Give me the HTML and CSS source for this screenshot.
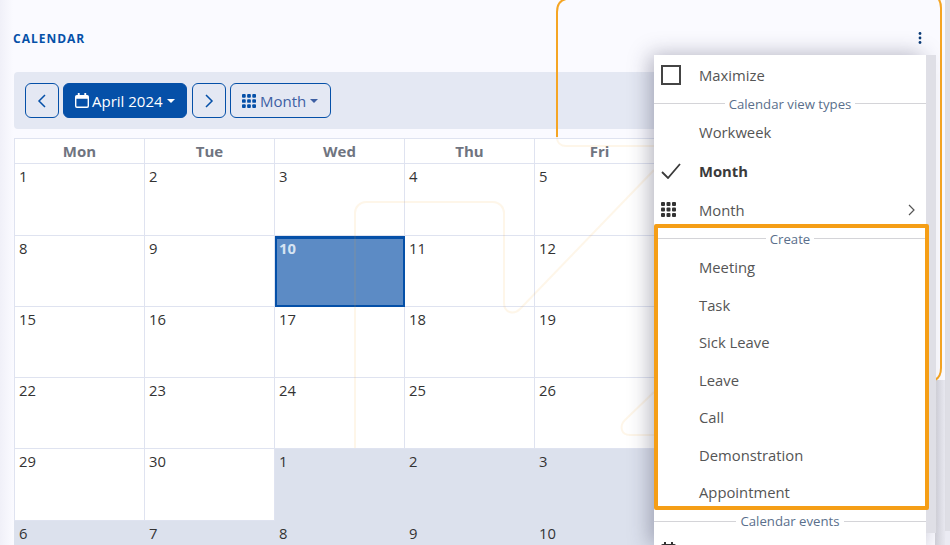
FILE: index.html
```html
<!DOCTYPE html>
<html lang="en">
<head>
    <meta charset="UTF-8">
    <meta name="viewport" content="width=device-width, initial-scale=1.0">
    <title>Calendar</title>
    <link rel="stylesheet" href="styles.css">
</head>
<body>

<div class="page">
    <div class="title-row">
        <h1>CALENDAR</h1>
        <button class="kebab" aria-label="Options">
            <svg width="4" height="12" viewBox="0 0 4 12"><circle cx="2" cy="1.5" r="1.4"/><circle cx="2" cy="6" r="1.4"/><circle cx="2" cy="10.5" r="1.4"/></svg>
        </button>
    </div>

    <div class="toolbar">
        <button class="btn btn-arrow" aria-label="Previous">
            <svg width="10" height="16" viewBox="0 0 10 16"><path d="M8 2 2 8l6 6" fill="none" stroke="currentColor" stroke-width="1.5"/></svg>
        </button>
        <button class="btn btn-date">
            <svg width="14" height="15" viewBox="0 0 15 16"><path d="M3 0h2v2h5V0h2v2h1a2 2 0 0 1 2 2v10a2 2 0 0 1-2 2H2a2 2 0 0 1-2-2V4a2 2 0 0 1 2-2h1zM1.5 6v8c0 .3.2.5.5.5h11c.3 0 .5-.2.5-.5V6z" fill="currentColor"/></svg>
            April 2024<span class="caret"></span>
        </button>
        <button class="btn btn-arrow btn-next" aria-label="Next">
            <svg width="10" height="16" viewBox="0 0 10 16"><path d="M2 2l6 6-6 6" fill="none" stroke="currentColor" stroke-width="1.5"/></svg>
        </button>
        <button class="btn btn-view">
            <svg width="14" height="14" viewBox="0 0 15 15"><g fill="currentColor"><rect width="4" height="4" rx="1"/><rect x="5.5" width="4" height="4" rx="1"/><rect x="11" width="4" height="4" rx="1"/><rect y="5.5" width="4" height="4" rx="1"/><rect x="5.5" y="5.5" width="4" height="4" rx="1"/><rect x="11" y="5.5" width="4" height="4" rx="1"/><rect y="11" width="4" height="4" rx="1"/><rect x="5.5" y="11" width="4" height="4" rx="1"/><rect x="11" y="11" width="4" height="4" rx="1"/></g></svg>
            Month<span class="caret"></span>
        </button>
    </div>

    <table class="calendar">
        <thead>
            <tr><th>Mon</th><th>Tue</th><th>Wed</th><th>Thu</th><th>Fri</th><th>Sat</th><th>Sun</th></tr>
        </thead>
        <tbody>
            <tr class="row-tall"><td>1</td><td>2</td><td>3</td><td>4</td><td>5</td><td>6</td><td>7</td></tr>
            <tr><td>8</td><td>9</td><td class="today">10</td><td>11</td><td>12</td><td>13</td><td>14</td></tr>
            <tr><td>15</td><td>16</td><td>17</td><td>18</td><td>19</td><td>20</td><td>21</td></tr>
            <tr><td>22</td><td>23</td><td>24</td><td>25</td><td>26</td><td>27</td><td>28</td></tr>
            <tr class="row-tall"><td>29</td><td>30</td><td class="other">1</td><td class="other">2</td><td class="other">3</td><td class="other">4</td><td class="other">5</td></tr>
            <tr><td class="other">6</td><td class="other">7</td><td class="other">8</td><td class="other">9</td><td class="other">10</td><td class="other">11</td><td class="other">12</td></tr>
        </tbody>
    </table>
</div>

<div class="edge-shade"></div>
<div class="page-scroll"></div>

<svg class="deco" width="950" height="545" viewBox="0 0 950 545" fill="none">
    <g stroke="#f5a524" stroke-opacity="0.1" stroke-width="2">
        <path d="M355 448V213a11 11 0 0 1 11-11h127a11 11 0 0 1 11 11v90c0 10 10 12 16 6L654 170"/>
        <path d="M654 392 625 420c-6 6-4 15 5 15h24"/>
        <path d="M557 137c0 6 4 9 9 9h88"/>
    </g>
    <path d="M557 137V12Q557 1 566 -1" stroke="#f5a524" stroke-width="2"/>
    <path d="M935 -4q6 3 6 12v360q0 9-6 12" stroke="#f5a524" stroke-width="2"/>
</svg>

<div class="menu">
    <div class="menu-item">
        <span class="menu-icon"><span class="check-box"></span></span>
        Maximize
    </div>
    <div class="menu-sep"><span>Calendar view types</span></div>
    <div class="menu-item">
        <span class="menu-icon"></span>
        Workweek
    </div>
    <div class="menu-item menu-item-active">
        <span class="menu-icon">
            <svg width="20" height="16" viewBox="0 0 20 16"><path d="M1 9l6 6L19 1" fill="none" stroke="#3a3a3a" stroke-width="1.8"/></svg>
        </span>
        Month
    </div>
    <div class="menu-item">
        <span class="menu-icon">
            <svg width="15" height="15" viewBox="0 0 15 15"><g fill="#333"><rect width="4" height="4" rx="1"/><rect x="5.5" width="4" height="4" rx="1"/><rect x="11" width="4" height="4" rx="1"/><rect y="5.5" width="4" height="4" rx="1"/><rect x="5.5" y="5.5" width="4" height="4" rx="1"/><rect x="11" y="5.5" width="4" height="4" rx="1"/><rect y="11" width="4" height="4" rx="1"/><rect x="5.5" y="11" width="4" height="4" rx="1"/><rect x="11" y="11" width="4" height="4" rx="1"/></g></svg>
        </span>
        Month
        <svg class="menu-arrow" width="7" height="12" viewBox="0 0 7 12"><path d="M1 1l5 5-5 5" fill="none" stroke="#555" stroke-width="1.2"/></svg>
    </div>
    <div class="menu-sep"><span>Create</span></div>
    <div class="menu-item"><span class="menu-icon"></span>Meeting</div>
    <div class="menu-item"><span class="menu-icon"></span>Task</div>
    <div class="menu-item"><span class="menu-icon"></span>Sick Leave</div>
    <div class="menu-item"><span class="menu-icon"></span>Leave</div>
    <div class="menu-item"><span class="menu-icon"></span>Call</div>
    <div class="menu-item"><span class="menu-icon"></span>Demonstration</div>
    <div class="menu-item"><span class="menu-icon"></span>Appointment</div>
    <div class="menu-sep"><span>Calendar events</span></div>
    <div class="menu-item">
        <span class="menu-icon">
            <svg width="15" height="16" viewBox="0 0 15 16"><path d="M3 0h2v2h5V0h2v2h1a2 2 0 0 1 2 2v10a2 2 0 0 1-2 2H2a2 2 0 0 1-2-2V4a2 2 0 0 1 2-2h1z" fill="#333"/></svg>
        </span>
        Group
    </div>
</div>
<div class="menu-track"></div>
<div class="highlight"></div>

</body>
</html>
```

FILE: styles.css
```css
* {
    box-sizing: border-box;
}

html, body {
    margin: 0;
    height: 545px;
    overflow: hidden;
}

body {
    font-family: "Open Sans", "Noto Sans", sans-serif;
    font-size: 14.8px;
    color: #333;
    background: linear-gradient(to right, #f0f0f8, #fafaff 13px);
}

.page {
    height: 545px;
    padding: 0 15px 0 14px;
    overflow: hidden;
}

.title-row {
    display: flex;
    align-items: center;
    justify-content: space-between;
    height: 72px;
    padding: 4px 13px 0 0;
    margin-left: -1px;
}

h1 {
    margin: 0;
    font-size: 12px;
    font-weight: 700;
    letter-spacing: 1px;
    color: #0550a8;
}

.kebab {
    display: flex;
    padding: 0;
    border: none;
    background: none;
    fill: #0b3c78;
}

.toolbar {
    display: flex;
    align-items: center;
    height: 57px;
    padding-left: 11px;
    margin-bottom: 9px;
    background: #e4e8f3;
    border-radius: 4px;
}

.btn {
    display: flex;
    align-items: center;
    justify-content: flex-start;
    height: 35px;
    padding: 0 0 0 11px;
    font-family: inherit;
    font-size: 15px;
    color: #0550a8;
    background: none;
    border: 1px solid #0550a8;
    border-radius: 6px;
}

.btn-arrow {
    justify-content: center;
    width: 34px;
    padding: 0;
}

.btn-date {
    width: 124px;
    margin: 0 5px 0 4px;
    gap: 3px;
    color: #fff;
    background: #0550a8;
}

.btn-view {
    width: 101px;
    margin-left: 4px;
    gap: 4px;
    color: #3d5fa3;
}

.btn-view svg {
    color: #0550a8;
}

.caret {
    margin-left: 1px;
    border-top: 4px solid currentColor;
    border-left: 4px solid transparent;
    border-right: 4px solid transparent;
}

.btn-view .caret {
    margin-left: 0;
}

.calendar {
    width: 910px;
    table-layout: fixed;
    border-collapse: collapse;
    background: #fff;
}

.calendar th, .calendar td {
    width: 130px;
    border: 1px solid #dfe3f0;
}

.calendar th {
    height: 25px;
    padding: 0;
    font-size: 15px;
    font-weight: 700;
    color: #6f7480;
    text-align: center;
}

.calendar td {
    height: 71px;
    padding: 2px 4px;
    vertical-align: top;
    color: #333;
}

.calendar .row-tall td {
    height: 72px;
}

.calendar td.other {
    background: #dce1ed;
    border-color: #dce1ed;
}

.calendar td.today {
    font-weight: 700;
    color: #d6e3f2;
    background: #5c8bc5;
    outline: 2px solid #0550a8;
    outline-offset: -2px;
    box-shadow: inset 0 3px 0 #0550a8;
}

.edge-shade {
    position: absolute;
    top: 380px;
    left: 935px;
    width: 10px;
    height: 165px;
    background: linear-gradient(to right, #d2d2da, #e8e8f0);
}

.page-scroll {
    position: absolute;
    top: 0;
    left: 945px;
    width: 5px;
    height: 545px;
    background: linear-gradient(#dedee5 531px, #ebebf3 531px);
}

.deco {
    position: absolute;
    top: 0;
    left: 0;
    pointer-events: none;
}

.menu {
    position: absolute;
    top: 55px;
    left: 654px;
    width: 272px;
    height: 490px;
    padding-top: 1px;
    overflow: hidden;
    color: #555;
    background: #fff;
    box-shadow: -4px 0 20px rgba(40, 40, 70, 0.35);
}

.menu-track {
    position: absolute;
    top: 55px;
    left: 926px;
    width: 10px;
    height: 478px;
    background: #dfdfe6;
}

.menu-item {
    display: flex;
    align-items: center;
    height: 37.5px;
    padding-left: 7px;
}

.menu-icon {
    display: flex;
    align-items: center;
    width: 38px;
}

.menu-item-active {
    height: 40px;
    font-weight: 700;
    color: #3a3a3a;
}

.check-box {
    width: 20px;
    height: 20px;
    border: 2px solid #444;
}

.menu-arrow {
    margin-left: auto;
    margin-right: 11px;
}

.menu-sep {
    display: flex;
    align-items: center;
    height: 20px;
    font-size: 13.2px;
    color: #5a6f8c;
}

.menu-sep::before, .menu-sep::after {
    content: "";
    flex: 1;
    height: 1px;
    background: #d4d4d8;
}

.menu-sep span {
    padding: 0 4px;
}

.highlight {
    position: absolute;
    top: 224px;
    left: 654px;
    width: 275px;
    height: 286px;
    border: 4px solid #f59e16;
    border-radius: 2px;
}
```
